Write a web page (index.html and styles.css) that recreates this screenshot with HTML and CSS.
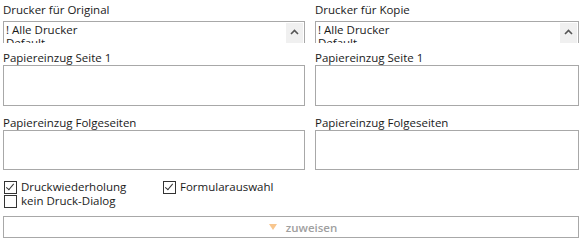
FILE: index.html
```html
<!DOCTYPE html>
<html lang="de">
<head>
    <meta charset="UTF-8">
    <title>Druckereinstellungen</title>
    <link rel="stylesheet" href="styles.css">
</head>
<body>
    <div class="grid">
        <div class="col">
            <div class="label first">Drucker für Original</div>
            <div class="listbox">
                <div class="items">
                    <div class="item">! Alle Drucker</div>
                    <div class="item">Default</div>
                </div>
                <div class="scroll">
                    <svg width="9" height="6" viewBox="0 0 9 6"><path d="M1 5 L4.5 1.5 L8 5" fill="none" stroke="#555" stroke-width="1.6"/></svg>
                </div>
            </div>
            <div class="label">Papiereinzug Seite 1</div>
            <div class="box"></div>
            <div class="label third">Papiereinzug Folgeseiten</div>
            <div class="box short"></div>
        </div>
        <div class="col">
            <div class="label first">Drucker für Kopie</div>
            <div class="listbox">
                <div class="items">
                    <div class="item">! Alle Drucker</div>
                    <div class="item">Default</div>
                </div>
                <div class="scroll">
                    <svg width="9" height="6" viewBox="0 0 9 6"><path d="M1 5 L4.5 1.5 L8 5" fill="none" stroke="#555" stroke-width="1.6"/></svg>
                </div>
            </div>
            <div class="label">Papiereinzug Seite 1</div>
            <div class="box"></div>
            <div class="label third">Papiereinzug Folgeseiten</div>
            <div class="box short"></div>
        </div>
    </div>

    <div class="checks">
        <label class="check wide"><span class="cb on"></span>Druckwiederholung</label>
        <label class="check"><span class="cb on"></span>Formularauswahl</label>
        <label class="check wide"><span class="cb"></span>kein Druck-Dialog</label>
    </div>

    <div class="button">
        <svg width="8" height="6" viewBox="0 0 8 6"><path d="M0 0 H8 L4 6 Z" fill="#f8c68e"/></svg>
        <span>zuweisen</span>
    </div>
</body>
</html>
```

FILE: styles.css
```css
body {
    margin: 0;
    padding: 3px 5px 0 3px;
    font-family: "Open Sans", "Noto Sans", sans-serif;
    font-size: 11.5px;
    color: #1a1a1a;
    background: #fff;
}
.grid {
    display: grid;
    grid-template-columns: 302px 264px;
    gap: 10px;
}
.col {
    display: flex;
    flex-direction: column;
}
.label {
    line-height: 14px;
    height: 14px;
    margin-top: 8px;
    white-space: nowrap;
}
.label.first {
    margin-top: 0;
    margin-bottom: 4px;
}
.label.third {
    margin-top: 10px;
}
.listbox {
    display: flex;
    height: 21px;
    overflow: hidden;
    border: 1px solid #a8a8a8;
    border-bottom: none;
}
.items {
    flex: 1;
    padding: 1px 0 0 2px;
}
.item {
    line-height: 13px;
}
.scroll {
    width: 17px;
    margin: 1px 1px 0 0;
    background: #f0f0f0;
    display: flex;
    justify-content: center;
    padding-top: 6px;
}
.box {
    height: 39px;
    border: 1px solid #a8a8a8;
}
.box.short {
    height: 38px;
}
.checks {
    display: grid;
    grid-template-columns: 159px auto;
    margin-top: 10px;
    padding-left: 1px;
}
.check {
    display: flex;
    align-items: center;
    gap: 4px;
    height: 14px;
    line-height: 14px;
}
.cb {
    width: 11px;
    height: 11px;
    border: 1px solid #333;
    position: relative;
}
.cb.on::after {
    content: "";
    position: absolute;
    left: 3px;
    top: 0;
    width: 3px;
    height: 7px;
    border: solid #333;
    border-width: 0 1.5px 1.5px 0;
    transform: rotate(40deg);
}
.button {
    margin-top: 8px;
    height: 20px;
    border: 1px solid #a8a8a8;
    display: flex;
    align-items: center;
    justify-content: center;
    gap: 9px;
    padding-left: 24px;
    width: 550px;
    color: #a0a0a0;
    font-weight: 600;
}
```
